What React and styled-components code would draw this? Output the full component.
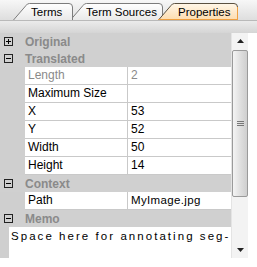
import React from "react";
import styled, { createGlobalStyle } from "styled-components";

const Global = createGlobalStyle`
  body { margin: 0; background: #fff; }
`;

const Page = styled.div`
  width: 257px;
  height: 267px;
  background: #fff;
  font-family: "Liberation Sans", Arial, sans-serif;
  font-size: 12px;
  overflow: hidden;
`;

const TabStrip = styled.div`
  height: 20px;
  display: flex;
  align-items: flex-end;
  padding-left: 13px;
  background: linear-gradient(#f7f7f7, #dedede);
  box-sizing: border-box;
`;

const TabBox = styled.div`
  position: relative;
  width: ${p => p.w}px;
  height: 17px;
  margin-left: ${p => p.overlap ? -p.overlap : 0}px;
  z-index: ${p => p.z};
  svg {
    position: absolute;
    left: 0;
    top: 0;
  }
`;

const TabLabel = styled.span`
  position: relative;
  display: block;
  padding-left: ${p => p.pad}px;
  line-height: 18px;
  font-size: 11.5px;
  color: #000;
  white-space: nowrap;
`;

const Band = styled.div`
  height: 13px;
  background: linear-gradient(#ebebeb, #d5d5d5);
  border-top: 1px solid #b9b9b9;
  box-sizing: border-box;
`;

const Main = styled.div`
  display: flex;
  height: 225px;
`;

const Grid = styled.div`
  flex: 1;
  background: linear-gradient(to right, #cfcfcf 9px, #fff 9px);
  overflow: hidden;
`;

const GroupRow = styled.div`
  display: flex;
  align-items: center;
  height: 17px;
  background: #d0d0d0;
  color: #8a8a8a;
  font-weight: bold;
`;

const Toggle = styled.span`
  width: 9px;
  height: 9px;
  margin: 0 12px 0 4px;
  display: flex;
  svg { display: block; }
`;

const PropRow = styled.div`
  display: grid;
  grid-template-columns: 25px 103px 1fr;
  height: 18px;
  background: #cfcfcf;
`;

const Cell = styled.div`
  background: #fff;
  border-bottom: 1px solid #c9c9c9;
  border-right: ${p => p.first ? "1px solid #c9c9c9" : "none"};
  padding-left: 3px;
  line-height: 17px;
  color: ${p => p.dim ? "#8a8a8a" : "#000"};
  letter-spacing: ${p => p.spaced ? "0.35px" : "normal"};
  font-size: ${p => p.spaced ? "11.5px" : "12px"};
  white-space: nowrap;
  overflow: hidden;
`;

const Gutter = styled.div`
  background: #cfcfcf;
`;

const MemoText = styled.div`
  margin-left: 9px;
  height: 18px;
  line-height: 18px;
  background: #fff;
  padding-left: 2px;
  letter-spacing: 2.05px;
  font-size: 11.5px;
  color: #000;
  white-space: nowrap;
  overflow: hidden;
`;

const ScrollBar = styled.div`
  width: 17px;
  margin-right: 9px;
  display: flex;
  flex-direction: column;
  background: #f3f3f3;
  border-left: 1px solid #e4e4e4;
  box-sizing: border-box;
`;

const Arrow = styled.div`
  height: 16px;
  display: flex;
  align-items: center;
  justify-content: center;
`;

const Thumb = styled.div`
  height: 145px;
  margin: 1px 0 0;
  border: 1px solid #9a9a9a;
  border-radius: 2px;
  background: linear-gradient(to right, #f4f4f4, #dcdcdc 60%, #cfcfcf);
  display: flex;
  align-items: center;
  justify-content: center;
`;

const Track = styled.div`
  flex: 1;
`;

const tabPath = (w, h) =>
  `M0.5,${h} L13,2.5 Q14.2,0.5 16.5,0.5 L${w - 4},0.5 Q${w - 0.5},0.5 ${w - 0.5},4 L${w - 0.5},${h}`;

const Tab = ({ label, w, overlap, z, pad, active }) => (
  <TabBox w={w} overlap={overlap} z={z}>
    <svg width={w} height={17}>
      <defs>
        <linearGradient id={"g" + label.replace(/ /g, "")} x1="0" y1="0" x2="0" y2="1">
          <stop offset="0" stopColor={active ? "#fff6e8" : "#ffffff"} />
          <stop offset="1" stopColor={active ? "#fddcae" : "#e9e9e9"} />
        </linearGradient>
      </defs>
      <path d={tabPath(w, 17) + " Z"} fill={`url(#g${label.replace(/ /g, "")})`} stroke="none" />
      <path d={tabPath(w, 17)} fill="none" stroke={active ? "#5a5040" : "#7c7c7c"} strokeWidth="1" />
      {active && (
        <>
          <path d={`M${w - 0.5},4 L${w - 0.5},17`} stroke="#f0a040" strokeWidth="1" />
          <path d={`M0,16.5 L${w},16.5`} stroke="#f0a040" strokeWidth="1" />
        </>
      )}
    </svg>
    <TabLabel pad={pad}>{label}</TabLabel>
  </TabBox>
);

const Sign = ({ open }) => (
  <svg width="9" height="9" viewBox="0 0 9 9">
    <rect x="0.5" y="0.5" width="8" height="8" fill="none" stroke="#222" />
    <path d="M2,4.5 H7" stroke="#000" />
    {!open && <path d="M4.5,2 V7" stroke="#000" />}
  </svg>
);

const Group = ({ title, open }) => (
  <GroupRow>
    <Toggle><Sign open={open} /></Toggle>
    {title}
  </GroupRow>
);

const Prop = ({ name, value, dim, spaced }) => (
  <PropRow>
    <Gutter />
    <Cell first dim={dim}>{name}</Cell>
    <Cell dim={dim} spaced={spaced}>{value}</Cell>
  </PropRow>
);

export default function App() {
  return (
    <Page>
      <Global />
      <TabStrip>
        <Tab label="Terms" w={60} z={3} pad={18} />
        <Tab label="Term Sources" w={93} overlap={3} z={2} pad={16} />
        <Tab label="Properties" w={80} overlap={5} z={4} pad={20} active />
      </TabStrip>
      <Band />
      <Main>
        <Grid>
          <Group title="Original" />
          <Group title="Translated" open />
          <Prop name="Length" value="2" dim />
          <Prop name="Maximum Size" value="" />
          <Prop name="X" value="53" />
          <Prop name="Y" value="52" />
          <Prop name="Width" value="50" />
          <Prop name="Height" value="14" />
          <Group title="Context" open />
          <Prop name="Path" value="MyImage.jpg" spaced />
          <Group title="Memo" open />
          <MemoText>Space here for annotating seg-</MemoText>
        </Grid>
        <ScrollBar>
          <Arrow>
            <svg width="7" height="4" viewBox="0 0 7 4"><path d="M0,4 L3.5,0 L7,4 Z" fill="#222" /></svg>
          </Arrow>
          <Thumb>
            <svg width="7" height="6" viewBox="0 0 7 6">
              <path d="M0,0.5 H7 M0,2.5 H7 M0,4.5 H7" stroke="#777" />
            </svg>
          </Thumb>
          <Track />
          <Arrow>
            <svg width="7" height="4" viewBox="0 0 7 4"><path d="M0,0 L7,0 L3.5,4 Z" fill="#222" /></svg>
          </Arrow>
        </ScrollBar>
      </Main>
    </Page>
  );
}
